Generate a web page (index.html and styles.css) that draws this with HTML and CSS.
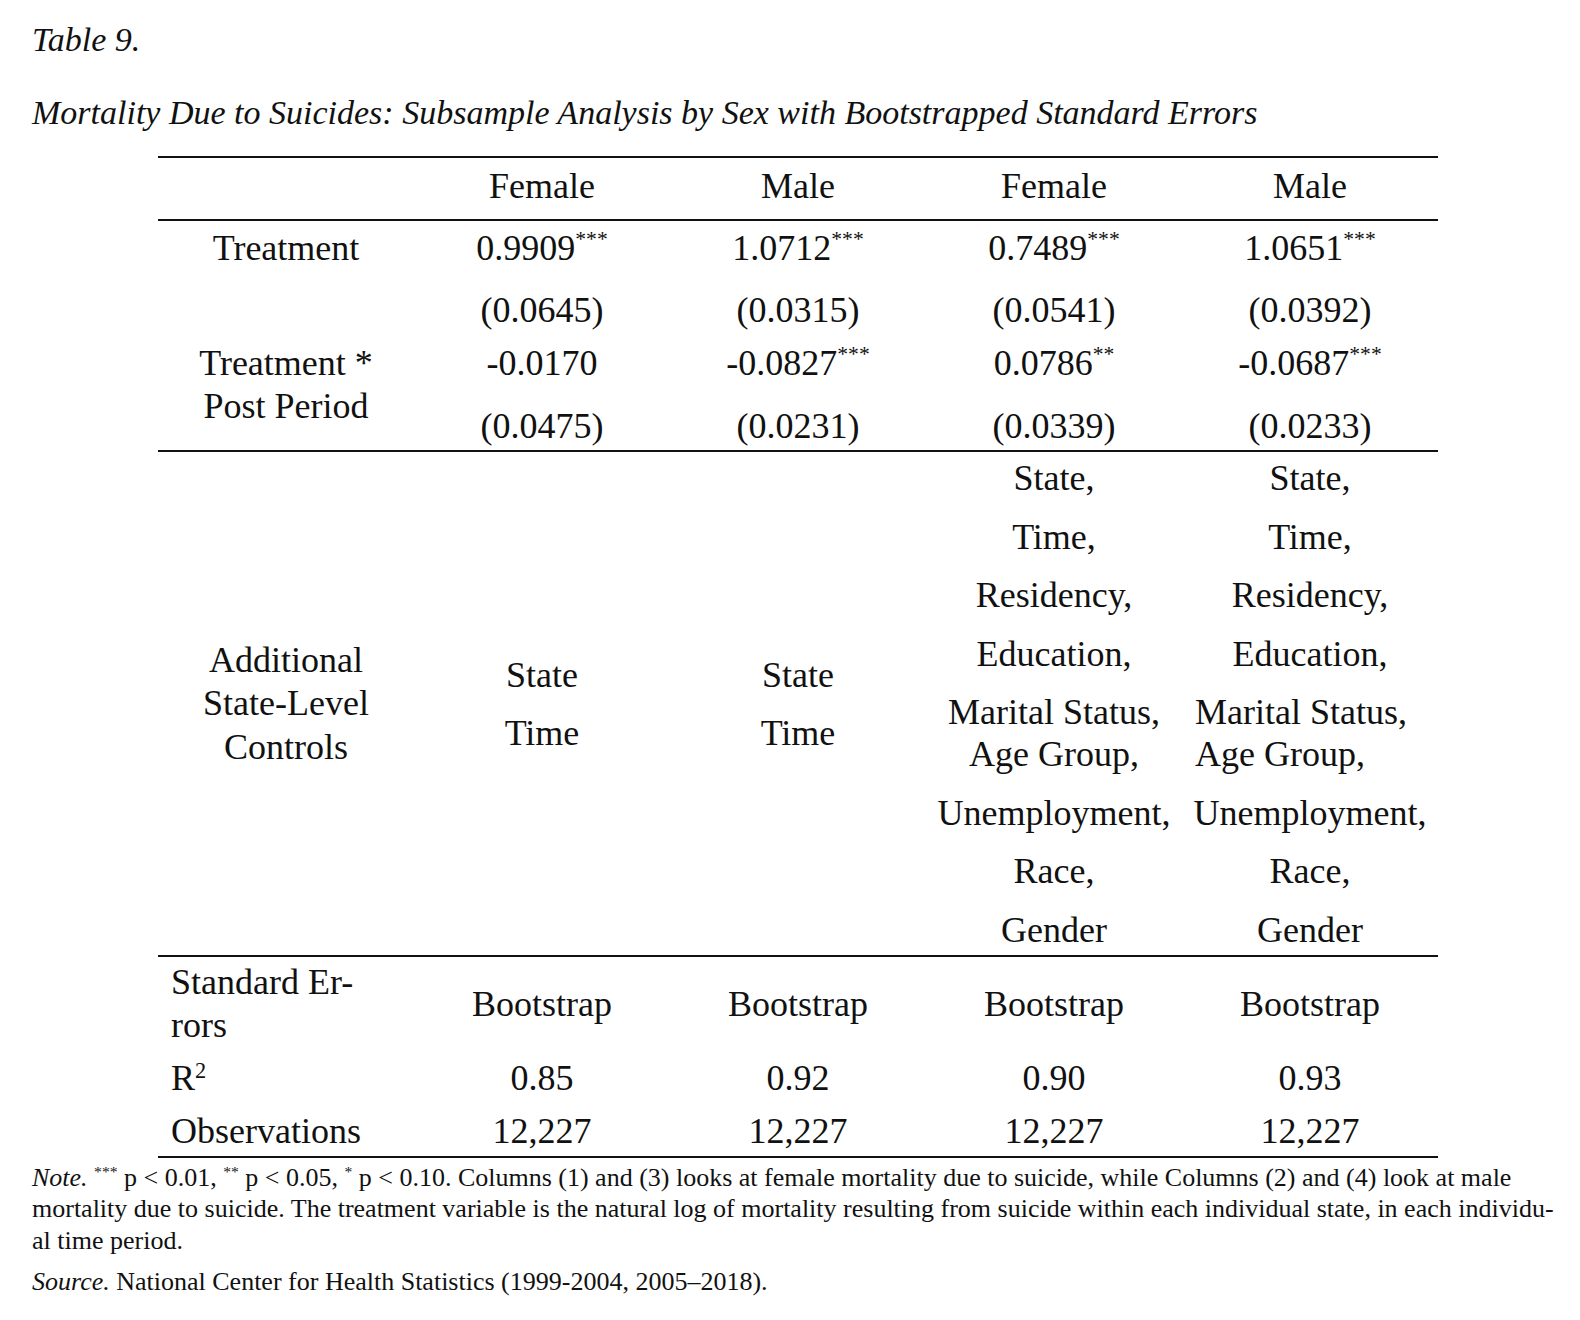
FILE: index.html
```html
<!DOCTYPE html>
<html lang="en">
<head>
<meta charset="utf-8">
<title>Table 9</title>
<link rel="stylesheet" href="styles.css">
</head>
<body>
<div class="page">
  <p class="tnum">Table 9.</p>
  <p class="ttitle">Mortality Due to Suicides: Subsample Analysis by Sex with Bootstrapped Standard Errors</p>
  <table class="reg">
    <colgroup><col class="c"><col class="c"><col class="c"><col class="c"><col class="c"></colgroup>
    <thead>
      <tr class="rh"><th></th><th>Female</th><th>Male</th><th>Female</th><th>Male</th></tr>
    </thead>
    <tbody>
      <tr class="ra"><td>Treatment</td><td>0.9909<sup>***</sup></td><td>1.0712<sup>***</sup></td><td>0.7489<sup>***</sup></td><td>1.0651<sup>***</sup></td></tr>
      <tr class="rb"><td></td><td>(0.0645)</td><td>(0.0315)</td><td>(0.0541)</td><td>(0.0392)</td></tr>
      <tr class="rc"><td class="span2" rowspan="2">Treatment *<br>Post Period</td><td>-0.0170</td><td>-0.0827<sup>***</sup></td><td>0.0786<sup>**</sup></td><td>-0.0687<sup>***</sup></td></tr>
      <tr class="rd"><td>(0.0475)</td><td>(0.0231)</td><td>(0.0339)</td><td>(0.0233)</td></tr>
      <tr class="re">
        <td class="lab3">Additional<br>State-Level<br>Controls</td>
        <td><p>State</p><p>Time</p></td>
        <td><p>State</p><p>Time</p></td>
        <td><p>State,</p><p>Time,</p><p>Residency,</p><p>Education,</p><p>Marital Status, Age Group,</p><p>Unemployment,</p><p>Race,</p><p>Gender</p></td>
        <td><p>State,</p><p>Time,</p><p>Residency,</p><p>Education,</p><p class="lft">Marital Status,<br>Age Group,</p><p>Unemployment,</p><p>Race,</p><p>Gender</p></td>
      </tr>
      <tr class="rf"><td class="left two">Standard Er-<br>rors</td><td>Bootstrap</td><td>Bootstrap</td><td>Bootstrap</td><td>Bootstrap</td></tr>
      <tr class="rg"><td class="left">R<sup class="sq">2</sup></td><td>0.85</td><td>0.92</td><td>0.90</td><td>0.93</td></tr>
      <tr class="rl"><td class="left">Observations</td><td>12,227</td><td>12,227</td><td>12,227</td><td>12,227</td></tr>
    </tbody>
  </table>
  <p class="note"><em>Note.</em> <sup>***</sup> p &lt; 0.01, <sup>**</sup> p &lt; 0.05, <sup>*</sup> p &lt; 0.10. Columns (1) and (3) looks at female mortality due to suicide, while Columns (2) and (4) look at male<br>mortality due to suicide. The treatment variable is the natural log of mortality resulting from suicide within each individual state, in each individu-<br>al time period.</p>
  <p class="source"><em>Source.</em> National Center for Health Statistics (1999-2004, 2005–2018).</p>
</div>
</body>
</html>
```

FILE: styles.css
```css
html, body {
  margin: 0;
  padding: 0;
  background: #ffffff;
}

body {
  font-family: "Liberation Serif", "Times New Roman", serif;
  color: #111111;
}

.page {
  padding: 20px 0 0 32px;
}

.tnum,
.ttitle {
  margin: 0;
  font-style: italic;
  font-size: 34px;
  line-height: 40px;
}

.ttitle {
  margin-top: 33px;
}

.reg {
  margin: 23px 0 0 126px;
  border-collapse: collapse;
  table-layout: fixed;
  width: 1280px;
  font-size: 36px;
  line-height: 42px;
}

.reg col.c {
  width: 256px;
}

.reg th,
.reg td {
  padding: 0;
  text-align: center;
  vertical-align: middle;
  font-weight: normal;
}

.reg sup {
  font-size: 0.6em;
  line-height: 0;
  vertical-align: 0.65em;
}

.reg sup.sq {
  font-size: 0.62em;
  vertical-align: 0.55em;
}

.rh th {
  border-top: 2px solid #111;
  border-bottom: 2px solid #111;
  padding: 7px 0 12px;
}

.ra td { padding: 6px 0 10px; }
.rb td { padding: 10px 0 11px; }
.rc td { padding: 0; }
.rd td { padding: 21px 0 3px; }

.reg td.span2 {
  vertical-align: top;
  padding: 0;
  line-height: 43px;
}

.rd td,
.rc td.span2 {
  border-bottom: 2px solid #111;
}

.re td {
  padding: 5px 0 4px;
  border-bottom: 2px solid #111;
}

.re p {
  margin: 0 0 16.5px;
}

.re p:last-child {
  margin-bottom: 0;
}

.re p.lft {
  text-align: left;
  padding-left: 13px;
}

.reg td.lab3 {
  line-height: 43.5px;
}

.reg td.left {
  text-align: left;
  padding-left: 13px;
}

.rf td { padding-top: 4px; padding-bottom: 0; }
.rf td.two { line-height: 43px; }
.rg td { padding-top: 10px; padding-bottom: 0; }
.rl td {
  padding-top: 11px;
  padding-bottom: 4px;
  border-bottom: 2px solid #111;
}

.note,
.source {
  margin: 0;
  font-size: 26px;
  line-height: 31.5px;
  width: 1540px;
}

.note {
  margin-top: 4px;
}

.note sup {
  font-size: 0.6em;
  line-height: 0;
  vertical-align: 0.55em;
}

.source {
  margin-top: 10px;
}
```
